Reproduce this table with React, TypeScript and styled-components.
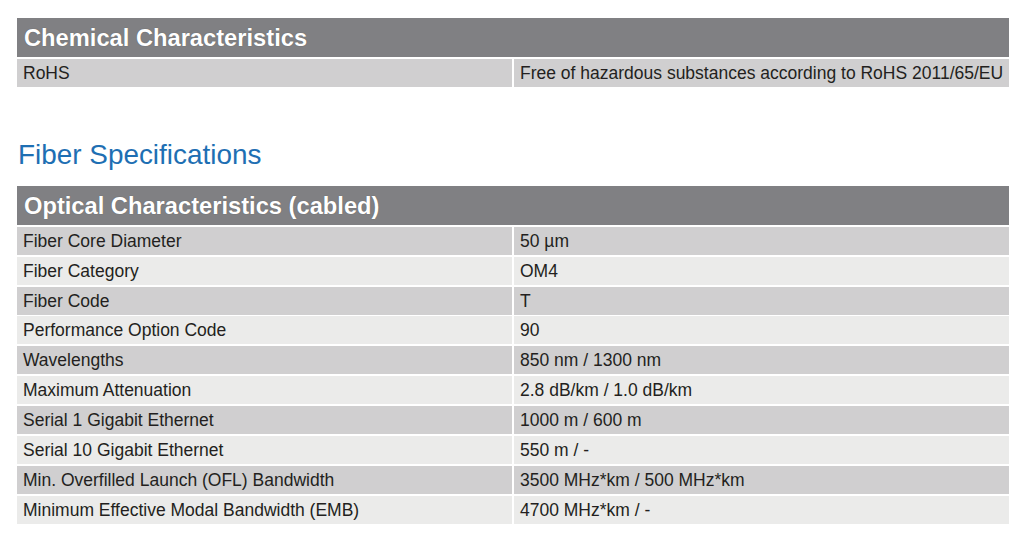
import React from "react";
import styled, { createGlobalStyle } from "styled-components";

const GlobalStyle = createGlobalStyle`
  body {
    margin: 0;
    background: #ffffff;
    font-family: "Liberation Sans", Arial, sans-serif;
  }
`;

const opticalRows: [string, string][] = [
  ["Fiber Core Diameter", "50 µm"],
  ["Fiber Category", "OM4"],
  ["Fiber Code", "T"],
  ["Performance Option Code", "90"],
  ["Wavelengths", "850 nm / 1300 nm"],
  ["Maximum Attenuation", "2.8 dB/km / 1.0 dB/km"],
  ["Serial 1 Gigabit Ethernet", "1000 m / 600 m"],
  ["Serial 10 Gigabit Ethernet", "550 m / -"],
  ["Min. Overfilled Launch (OFL) Bandwidth", "3500 MHz*km / 500 MHz*km"],
  ["Minimum Effective Modal Bandwidth (EMB)", "4700 MHz*km / -"],
];

function SpecTable({ title, rows }: { title: string; rows: [string, string][] }) {
  return (
    <Table>
      <Header>{title}</Header>
      {rows.map(([label, value], i) => (
        <React.Fragment key={label}>
          <Cell $odd={i % 2 === 0}>{label}</Cell>
          <Cell $odd={i % 2 === 0}>{value}</Cell>
        </React.Fragment>
      ))}
    </Table>
  );
}

export default function App() {
  return (
    <Page>
      <GlobalStyle />
      <SpecTable
        title="Chemical Characteristics"
        rows={[["RoHS", "Free of hazardous substances according to RoHS 2011/65/EU"]]}
      />
      <SectionTitle>Fiber Specifications</SectionTitle>
      <SpecTable title="Optical Characteristics (cabled)" rows={opticalRows} />
    </Page>
  );
}

const Page = styled.div`
  padding: 18px 0 0 17px;
  width: 992px;
`;

const Table = styled.div`
  display: grid;
  grid-template-columns: 1fr 1fr;
  column-gap: 2px;
  row-gap: 1.9px;
`;

const Header = styled.div`
  grid-column: 1 / -1;
  height: 39px;
  background: #808083;
  color: #ffffff;
  font-size: 23.7px;
  font-weight: bold;
  display: flex;
  align-items: center;
  padding: 2px 0 0 7px;
  box-sizing: border-box;
  text-shadow: 0 0 1px rgba(0, 0, 0, 0.35);
`;

const Cell = styled.div<{ $odd: boolean }>`
  height: 28px;
  box-sizing: border-box;
  padding: 1px 0 0 6px;
  background: ${(p) => (p.$odd ? "#d0cfd0" : "#ebebea")};
  color: #231f20;
  font-size: 17.5px;
  display: flex;
  align-items: center;
`;

const SectionTitle = styled.h2`
  margin: 52px 0 15px 1px;
  font-size: 27.9px;
  font-weight: normal;
  color: #1e6fb3;
  line-height: 32px;
`;
